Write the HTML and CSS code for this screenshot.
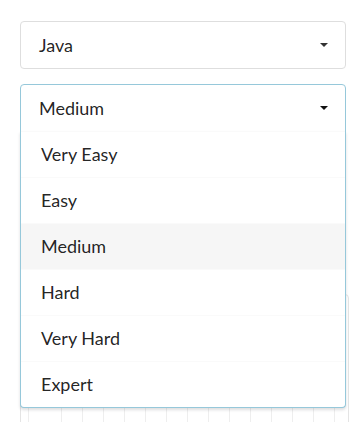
FILE: index.html
```html
<!DOCTYPE html>
<html>
<head>
	<title>dropdowns</title>
	<meta charset="utf-8"/>
	<link rel="stylesheet" href="styles.css">
</head>
<body>
	<div class="page">
		<div class="dropdown">
			<div class="text">Java</div>
			<i class="caret"></i>
		</div>
		<div class="dropdown active">
			<div class="text">Medium</div>
			<i class="caret"></i>
			<div class="menu">
				<div class="item">Very Easy</div>
				<div class="item">Easy</div>
				<div class="item selected">Medium</div>
				<div class="item">Hard</div>
				<div class="item">Very Hard</div>
				<div class="item">Expert</div>
			</div>
		</div>
		<div class="grid"></div>
	</div>
</body>
</html>
```
FILE: styles.css
```css
body{
	margin: 0;
	background-color: #fff;
	font-family: Lato, "Liberation Sans", sans-serif;
	color: rgba(0,0,0,.87);
}
.page{
	padding: 21px 6px 0 20px;
	display: flex;
	flex-direction: column;
	gap: 15px;
}
.dropdown{
	position: relative;
	height: 46px;
	border: 1px solid #dedede;
	border-radius: 4px;
	font-size: 18px;
	display: flex;
	align-items: center;
	padding: 0 18px;
	margin-right: 3px;
}
.dropdown .text{
	flex: 1;
	line-height: 18px;
}
.dropdown.active{
	border-color: #96c8da;
	border-bottom-left-radius: 0;
	border-bottom-right-radius: 0;
}
.caret{
	width: 0;
	height: 0;
	border-left: 4px solid transparent;
	border-right: 4px solid transparent;
	border-top: 4px solid #333;
	margin-right: -1px;
	margin-top: -1px;
}
.dropdown.active .caret{
	border-top-color: #111;
}
.menu{
	position: absolute;
	top: 46px;
	left: -1px;
	right: -1px;
	background-color: #fff;
	border: 1px solid #96c8da;
	border-top: none;
	border-radius: 0 0 4px 4px;
	box-shadow: 0 2px 3px 0 rgba(34,36,38,.15);
	z-index: 2;
}
.item{
	height: 45px;
	line-height: 45px;
	padding: 0 20px;
	border-top: 1px solid #fafafa;
	color: rgba(0,0,0,.87);
}
.item.selected{
	background-color: #f6f6f6;
}
.grid{
	margin-top: 147px;
	height: 140px;
	border: 1px solid #e4e4e4;
	border-radius: 4px;
	background-image: repeating-linear-gradient(90deg, transparent 0, transparent 20px, #eeeeee 20px, #eeeeee 21px);
	background-position: 20px 0;
}
```
